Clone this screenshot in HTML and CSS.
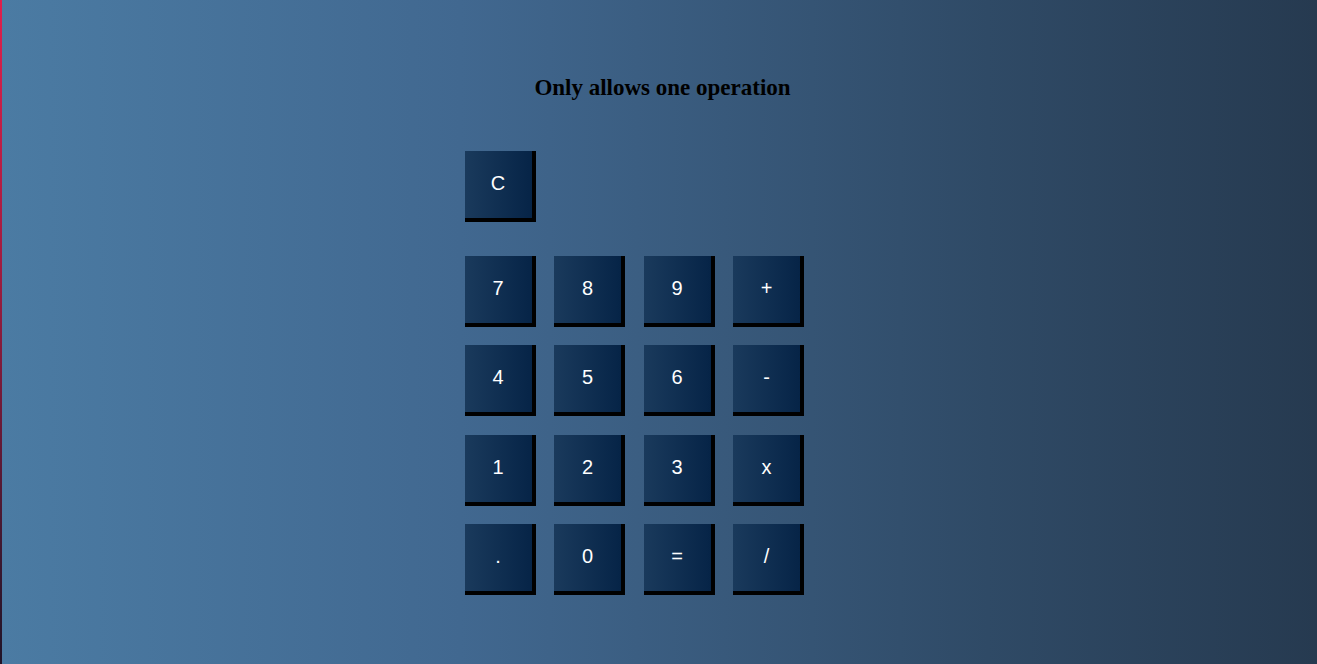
FILE: index.html
```html
<!DOCTYPE html>
<html>
<head>
<meta charset="utf-8">
<link rel="stylesheet" href="styles.css">
</head>
<body>
<main class="page">
  <h1 class="title">Only allows one operation</h1>
  <div class="calc">
    <div class="top-row">
      <button class="key">C</button>
    </div>
    <div class="keys">
      <button class="key">7</button>
      <button class="key">8</button>
      <button class="key">9</button>
      <button class="key">+</button>
      <button class="key">4</button>
      <button class="key">5</button>
      <button class="key">6</button>
      <button class="key">-</button>
      <button class="key">1</button>
      <button class="key">2</button>
      <button class="key">3</button>
      <button class="key">x</button>
      <button class="key">.</button>
      <button class="key">0</button>
      <button class="key">=</button>
      <button class="key">/</button>
    </div>
  </div>
</main>
</body>
</html>
```
FILE: styles.css
```css
html, body {
  margin: 0;
  padding: 0;
  height: 100%;
}
body {
  background: linear-gradient(to right, #4b7ba3 0%, #416890 35%, #2f4a66 75%, #263a50 100%);
  overflow: hidden;
}
.page {
  box-sizing: border-box;
  height: 664px;
  border-left: 2px solid transparent;
  border-image: linear-gradient(to bottom, #e01f4c 0%, #a01c40 40%, #3a1830 85%, #201428 100%) 1;
  display: flex;
  flex-direction: column;
  align-items: center;
  padding-top: 75px;
  padding-left: 6px;
}
.title {
  margin: 0;
  font-family: "Liberation Serif", "Times New Roman", serif;
  font-weight: bold;
  font-size: 23px;
  line-height: 26px;
  color: #000;
}
.calc {
  width: 396px;
  margin-top: 50px;
  display: flex;
  flex-direction: column;
  gap: 34px;
}
.top-row {
  display: flex;
}
.keys {
  display: grid;
  grid-template-columns: repeat(4, 71px);
  grid-auto-rows: 71px;
  column-gap: 18.5px;
  row-gap: 18.33px;
}
.key {
  box-sizing: border-box;
  width: 71px;
  height: 71px;
  margin: 0;
  padding: 0 0 2px;
  border: 0;
  border-right: 4px solid #000;
  border-bottom: 4px solid #000;
  background: linear-gradient(to right, #1a3a5c, #062447);
  color: #fff;
  font-family: "Liberation Sans", Arial, sans-serif;
  font-size: 20px;
  line-height: 65px;
  text-align: center;
  cursor: pointer;
}
```
